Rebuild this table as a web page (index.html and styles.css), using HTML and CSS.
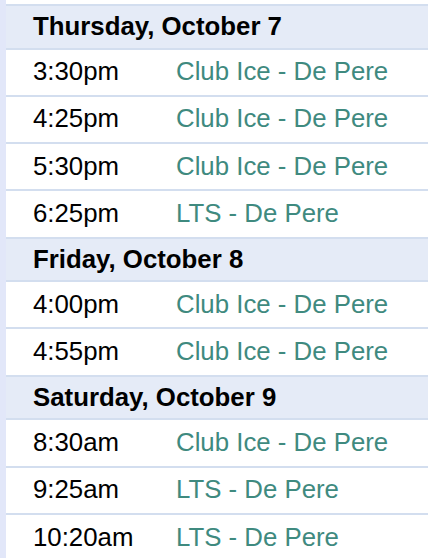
FILE: index.html
```html
<!DOCTYPE html>
<html>
<head>
<meta charset="utf-8">
<link rel="stylesheet" href="styles.css">
</head>
<body>
<div class="page">
  <div class="schedule">
    <div class="day">Thursday, October 7</div>
    <div class="row"><span class="time">3:30pm</span><span class="loc">Club Ice - De Pere</span></div>
    <div class="row"><span class="time">4:25pm</span><span class="loc">Club Ice - De Pere</span></div>
    <div class="row"><span class="time">5:30pm</span><span class="loc">Club Ice - De Pere</span></div>
    <div class="row"><span class="time">6:25pm</span><span class="loc">LTS - De Pere</span></div>
    <div class="day">Friday, October 8</div>
    <div class="row"><span class="time">4:00pm</span><span class="loc">Club Ice - De Pere</span></div>
    <div class="row"><span class="time">4:55pm</span><span class="loc">Club Ice - De Pere</span></div>
    <div class="day">Saturday, October 9</div>
    <div class="row"><span class="time">8:30am</span><span class="loc">Club Ice - De Pere</span></div>
    <div class="row"><span class="time">9:25am</span><span class="loc">LTS - De Pere</span></div>
    <div class="row"><span class="time">10:20am</span><span class="loc">LTS - De Pere</span></div>
  </div>
</div>
</body>
</html>
```
FILE: styles.css
```css
html, body {
  margin: 0;
  padding: 0;
  background: #ffffff;
  height: 100%;
  overflow: hidden;
}
.page {
  border-left: 6px solid #e2e7f9;
  min-height: 100%;
  padding-top: 4px;
  box-sizing: border-box;
  font-family: "Liberation Sans", Arial, sans-serif;
  font-size: 25.8px;
  color: #000;
}
.schedule {
  display: flex;
  flex-direction: column;
}
.day {
  display: flex;
  align-items: center;
  height: 43.5px;
  box-sizing: border-box;
  border-top: 2px solid #d3deef;
  background: #e5ebf7;
  padding-left: 27px;
  font-weight: bold;
}
.row {
  display: flex;
  align-items: center;
  height: 47.3px;
  box-sizing: border-box;
  border-top: 2px solid #d3deef;
  padding-left: 27px;
  padding-bottom: 1px;
}
.time {
  width: 143px;
  flex: none;
}
.loc {
  color: #3f8a7f;
}
```
